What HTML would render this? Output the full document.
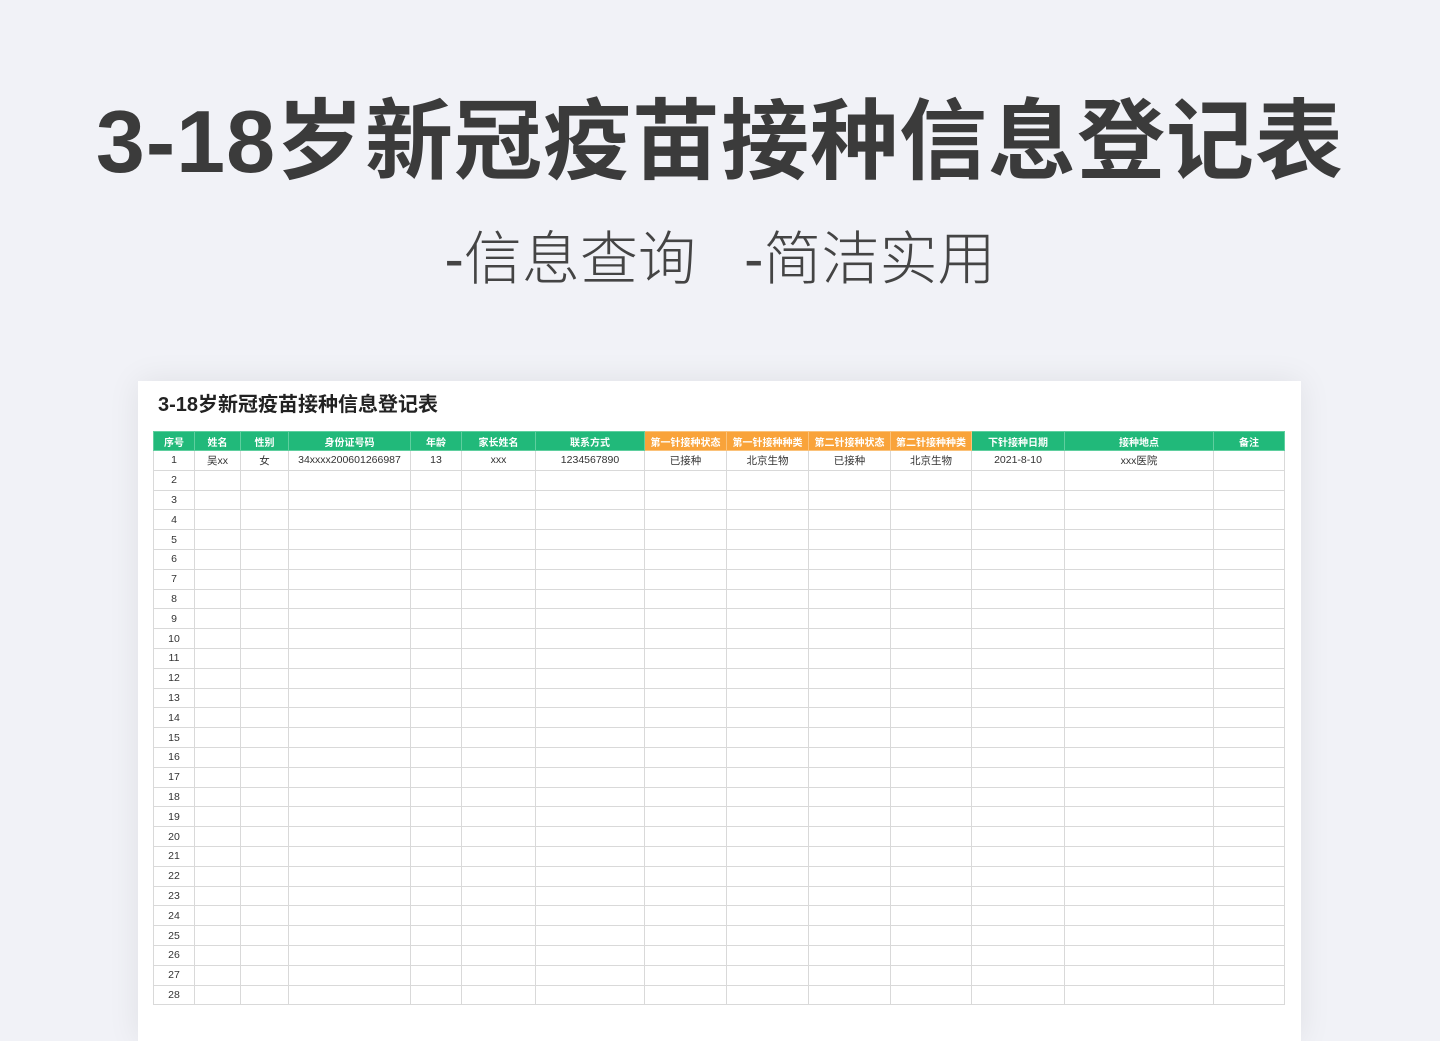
<!DOCTYPE html>
<html><head><meta charset="utf-8"><style>
body{margin:0;width:1440px;height:1018px;background:#f1f2f7;overflow:hidden;position:relative;font-family:"Liberation Sans","Noto Sans CJK SC",sans-serif;}
.h1{position:absolute;left:0;width:1440px;top:82px;text-align:center;font-size:88px;font-weight:700;color:#3b3b3b;line-height:120px;letter-spacing:1px;}
.h2{position:absolute;left:0;width:1440px;top:222px;text-align:center;font-size:58px;font-weight:300;color:#444;line-height:76px;}
.card{position:absolute;left:138px;top:381px;width:1163px;height:660px;background:#fff;box-shadow:0 0 30px rgba(0,0,0,0.08);}
.t{position:absolute;left:158px;top:391px;font-size:20px;font-weight:700;color:#222;line-height:28px;}
table{position:absolute;left:153px;top:431px;border-collapse:collapse;table-layout:fixed;font-size:10.5px;color:#333;}
td{border:1px solid #d9d9d9;height:18.8px;padding:0;text-align:center;white-space:nowrap;overflow:hidden;}
tr.hd td{background:#21b97a;color:#fff;font-weight:700;height:18px;border-color:#5fcf9f;font-size:10px;}
tr.hd td.o{background:#f9a33a;border-color:#fbc27a;}
</style></head><body>
<div class="h1">3-18岁新冠疫苗接种信息登记表</div>
<div class="h2">-信息查询&nbsp;&nbsp;&nbsp;-简洁实用</div>
<div class="card"></div>
<div class="t">3-18岁新冠疫苗接种信息登记表</div>
<table>
<colgroup><col style="width:41px"><col style="width:46px"><col style="width:48px"><col style="width:122px"><col style="width:51px"><col style="width:74px"><col style="width:109px"><col style="width:82px"><col style="width:82px"><col style="width:82px"><col style="width:81px"><col style="width:93px"><col style="width:149px"><col style="width:71px"></colgroup>
<tr class="hd"><td>序号</td><td>姓名</td><td>性别</td><td>身份证号码</td><td>年龄</td><td>家长姓名</td><td>联系方式</td><td class="o">第一针接种状态</td><td class="o">第一针接种种类</td><td class="o">第二针接种状态</td><td class="o">第二针接种种类</td><td>下针接种日期</td><td>接种地点</td><td>备注</td></tr>
<tr><td>1</td><td>吴xx</td><td>女</td><td>34xxxx200601266987</td><td>13</td><td>xxx</td><td>1234567890</td><td>已接种</td><td>北京生物</td><td>已接种</td><td>北京生物</td><td>2021-8-10</td><td>xxx医院</td><td></td></tr>
<tr><td>2</td><td></td><td></td><td></td><td></td><td></td><td></td><td></td><td></td><td></td><td></td><td></td><td></td><td></td></tr>
<tr><td>3</td><td></td><td></td><td></td><td></td><td></td><td></td><td></td><td></td><td></td><td></td><td></td><td></td><td></td></tr>
<tr><td>4</td><td></td><td></td><td></td><td></td><td></td><td></td><td></td><td></td><td></td><td></td><td></td><td></td><td></td></tr>
<tr><td>5</td><td></td><td></td><td></td><td></td><td></td><td></td><td></td><td></td><td></td><td></td><td></td><td></td><td></td></tr>
<tr><td>6</td><td></td><td></td><td></td><td></td><td></td><td></td><td></td><td></td><td></td><td></td><td></td><td></td><td></td></tr>
<tr><td>7</td><td></td><td></td><td></td><td></td><td></td><td></td><td></td><td></td><td></td><td></td><td></td><td></td><td></td></tr>
<tr><td>8</td><td></td><td></td><td></td><td></td><td></td><td></td><td></td><td></td><td></td><td></td><td></td><td></td><td></td></tr>
<tr><td>9</td><td></td><td></td><td></td><td></td><td></td><td></td><td></td><td></td><td></td><td></td><td></td><td></td><td></td></tr>
<tr><td>10</td><td></td><td></td><td></td><td></td><td></td><td></td><td></td><td></td><td></td><td></td><td></td><td></td><td></td></tr>
<tr><td>11</td><td></td><td></td><td></td><td></td><td></td><td></td><td></td><td></td><td></td><td></td><td></td><td></td><td></td></tr>
<tr><td>12</td><td></td><td></td><td></td><td></td><td></td><td></td><td></td><td></td><td></td><td></td><td></td><td></td><td></td></tr>
<tr><td>13</td><td></td><td></td><td></td><td></td><td></td><td></td><td></td><td></td><td></td><td></td><td></td><td></td><td></td></tr>
<tr><td>14</td><td></td><td></td><td></td><td></td><td></td><td></td><td></td><td></td><td></td><td></td><td></td><td></td><td></td></tr>
<tr><td>15</td><td></td><td></td><td></td><td></td><td></td><td></td><td></td><td></td><td></td><td></td><td></td><td></td><td></td></tr>
<tr><td>16</td><td></td><td></td><td></td><td></td><td></td><td></td><td></td><td></td><td></td><td></td><td></td><td></td><td></td></tr>
<tr><td>17</td><td></td><td></td><td></td><td></td><td></td><td></td><td></td><td></td><td></td><td></td><td></td><td></td><td></td></tr>
<tr><td>18</td><td></td><td></td><td></td><td></td><td></td><td></td><td></td><td></td><td></td><td></td><td></td><td></td><td></td></tr>
<tr><td>19</td><td></td><td></td><td></td><td></td><td></td><td></td><td></td><td></td><td></td><td></td><td></td><td></td><td></td></tr>
<tr><td>20</td><td></td><td></td><td></td><td></td><td></td><td></td><td></td><td></td><td></td><td></td><td></td><td></td><td></td></tr>
<tr><td>21</td><td></td><td></td><td></td><td></td><td></td><td></td><td></td><td></td><td></td><td></td><td></td><td></td><td></td></tr>
<tr><td>22</td><td></td><td></td><td></td><td></td><td></td><td></td><td></td><td></td><td></td><td></td><td></td><td></td><td></td></tr>
<tr><td>23</td><td></td><td></td><td></td><td></td><td></td><td></td><td></td><td></td><td></td><td></td><td></td><td></td><td></td></tr>
<tr><td>24</td><td></td><td></td><td></td><td></td><td></td><td></td><td></td><td></td><td></td><td></td><td></td><td></td><td></td></tr>
<tr><td>25</td><td></td><td></td><td></td><td></td><td></td><td></td><td></td><td></td><td></td><td></td><td></td><td></td><td></td></tr>
<tr><td>26</td><td></td><td></td><td></td><td></td><td></td><td></td><td></td><td></td><td></td><td></td><td></td><td></td><td></td></tr>
<tr><td>27</td><td></td><td></td><td></td><td></td><td></td><td></td><td></td><td></td><td></td><td></td><td></td><td></td><td></td></tr>
<tr><td>28</td><td></td><td></td><td></td><td></td><td></td><td></td><td></td><td></td><td></td><td></td><td></td><td></td><td></td></tr>
</table>
</body></html>
